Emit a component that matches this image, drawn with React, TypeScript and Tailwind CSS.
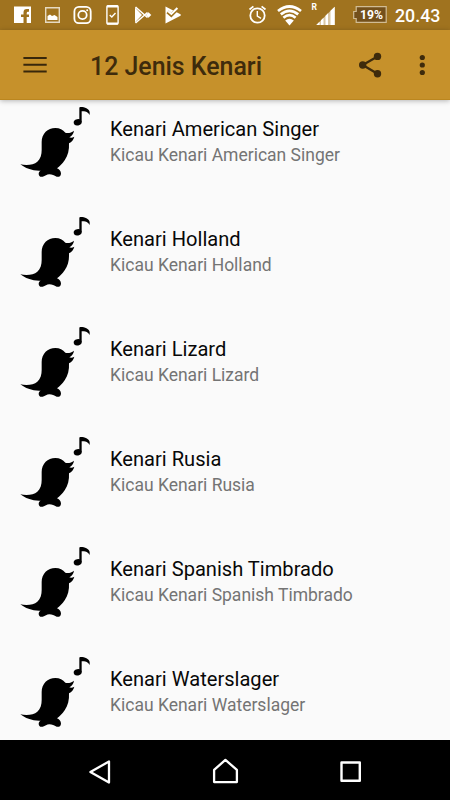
import React from 'react'

const birds = [
  'Kenari American Singer',
  'Kenari Holland',
  'Kenari Lizard',
  'Kenari Rusia',
  'Kenari Spanish Timbrado',
  'Kenari Waterslager'
]

function BirdIcon() {
  return (
    <svg className="w-[72px] h-[74px] shrink-0" viewBox="30 24 216 222" fill="#000">
      <path d="M31 199C50 203 71 201 82 191C92 182 95 170 95 156V132C95 107 113 90 136 90C149 90 159 95 166 104C175 107 184 104 192 98C191 106 187 111 183 115L178 118C183 120 188 119 193 116C191 125 185 132 177 136C178 156 174 173 164 187C157 197 149 206 141 211C147 213 153 219 153 227C152 235 146 238 140 236C133 232 126 229 118 229C110 229 106 234 98 236C91 238 86 234 86 227C86 222 89 219 92 218C67 219 46 211 31 199Z" />
      <ellipse cx="203" cy="73" rx="12" ry="9.5" transform="rotate(-12 203 73)" />
      <path d="M208 75V30Q208 26 213 27C224 27 237 32 239 42V51C233 41 225 40 215 40V73Z" />
    </svg>
  )
}

function StatusBar() {
  return (
    <div className="h-[30px] bg-[#a0731f] flex items-start text-white shrink-0">
      {/* Notifications */}
      <svg className="w-[186px] h-[30px] shrink-0" viewBox="0 0 186 30" fill="none" stroke="#fff">
        <path fill="#fff" stroke="none" d="M14 6.5H31V23H26.7V17H29V14.5H26.7V13.2Q26.7 11.8 28 11.8H29V9H26.8Q23.5 9 23.5 12.4V14.5H21V17H23.5V23H14Z" />
        <path stroke="#e6dac2" strokeWidth="1.4" d="M45.7 7.7H59.3V22.3H45.7Z" />
        <path fill="#fff" stroke="none" d="M47.5 20V16L50 14.5L52 16L54.5 15L57.5 17V20Z" />
        <rect x="74.4" y="6.9" width="16.3" height="16.3" rx="4.5" strokeWidth="1.8" />
        <circle cx="82.5" cy="15" r="4.2" strokeWidth="1.8" />
        <circle cx="87.2" cy="10.3" r="1" fill="#fff" stroke="none" />
        <rect x="106.9" y="5.8" width="11.2" height="18.3" rx="1" strokeWidth="1.4" />
        <path d="M107 6.5H118M107 23.5H118" strokeWidth="1.8" />
        <path d="M109.7 15L111.8 17L115.5 13" strokeWidth="1.4" />
        {/* Play Store */}
        <path fill="#fff" stroke="none" d="M135 7.5L142 15L135 22.5Z" />
        <path d="M135.5 7L147.5 17.5M135.5 23L147.5 12.5" strokeWidth="1.6" />
        <path fill="#fff" stroke="none" d="M145.8 15L148.5 12.2L151.3 15L148.5 17.8Z" />
        {/* Play Protect */}
        <path fill="#fff" stroke="none" d="M165.5 6.5L180.5 14.2Q181.3 15 180.5 15.8L165.5 23.5Z" />
        <path stroke="#a0731f" strokeWidth="3.6" d="M167.6 11.8L171.3 15L178.5 7.8" />
        <path strokeWidth="2" d="M168.2 11.2L171.4 14L177.4 8" />
      </svg>
      <div className="flex-1" />
      {/* System icons */}
      <svg className="w-[92px] h-[30px] shrink-0" viewBox="246 0 92 30" fill="none" stroke="#fff">
        <circle cx="257.5" cy="15.5" r="7.2" strokeWidth="1.8" />
        <path d="M249.5 9.5L253.4 6.3M265.5 9.5L261.6 6.3" strokeWidth="1.7" />
        <path d="M257.3 11V16L261 18.3" strokeWidth="1.4" />
        <path d="M278 11Q289.5 2 301 11M280.8 14.4Q289.5 7.2 298.2 14.4M283.4 17.7Q289.5 12.7 295.6 17.7" strokeWidth="2.7" />
        <path fill="#fff" stroke="none" d="M285.2 20.6Q289.5 17 293.8 20.6L289.5 25.6Z" />
        <text x="311.4" y="10" fill="#fff" stroke="none" fontFamily="Roboto, sans-serif" fontSize="8.5" fontWeight="700">R</text>
        <path fill="#d9c6a3" stroke="none" d="M316.3 25L334.7 6.7V25Z" />
        <path fill="#fff" stroke="none" d="M316.3 25L319.5 21.7V25ZM321 25V20.2L323.5 17.7V25ZM325.5 25V15.7L328 13.2V25ZM330.5 25V10.8L334.7 6.7V25Z" />
      </svg>
      <svg className="w-[36px] h-[30px] ml-[14px] shrink-0" viewBox="352 0 36 30">
        <path d="M356.2 6.7H386.2V22.3H356.2V18.5H353.7V11.5H356.2Z" fill="#73501b" stroke="#d1bc94" strokeWidth="1.2" />
        <text x="360" y="19.2" fill="#fff" fontFamily="Roboto, sans-serif" fontSize="13" fontWeight="700" textLength="23" lengthAdjust="spacingAndGlyphs">19%</text>
      </svg>
      <div className="w-[55px] ml-[7px] pt-[1px] text-[17.8px] leading-[30px] font-medium whitespace-nowrap">20.43</div>
    </div>
  )
}

function Toolbar() {
  return (
    <header className="relative z-10 h-[70px] bg-[#c6912b] flex items-center shrink-0 shadow-[0_1px_5px_rgba(0,0,0,0.28)] border-b border-[#bb861f]">
      <svg className="w-6 h-[18px] ml-[23px] mt-px" viewBox="0 0 24 18" stroke="#38270b" strokeWidth="2.1">
        <path d="M.4 2H23.7M.4 8.7H23.7M.4 15.5H23.7" />
      </svg>
      <h1 className="ml-[43px] mt-[4px] text-[24.9px] leading-[30px] font-medium text-[#3e2b0c] whitespace-nowrap">12 Jenis Kenari</h1>
      <div className="flex-1" />
      <svg className="w-[24px] h-[26px] shrink-0" viewBox="0 0 24 26" fill="#3e2b0c" stroke="#3e2b0c">
        <path d="M19.5 4.4L4.7 13L19.5 21.7" fill="none" strokeWidth="2.3" />
        <circle cx="19.5" cy="4.4" r="3.7" stroke="none" />
        <circle cx="4.7" cy="13" r="3.7" stroke="none" />
        <circle cx="19.5" cy="21.7" r="3.7" stroke="none" />
      </svg>
      <svg className="w-[6px] h-[22px] ml-[37px] mr-[25px] shrink-0" viewBox="0 0 6 22" fill="#3e2b0c">
        <circle cx="3.3" cy="3.5" r="2.6" />
        <circle cx="3.3" cy="11" r="2.6" />
        <circle cx="3.3" cy="18.5" r="2.6" />
      </svg>
    </header>
  )
}

function NavigationBar() {
  return (
    <nav className="h-[60px] bg-black flex items-center justify-between pl-[87px] pr-[87px] shrink-0">
      <svg className="w-6 h-[26px] mt-[4px]" viewBox="0 0 24 26" fill="none" stroke="#fff" strokeWidth="2.3" strokeLinejoin="round">
        <path d="M22 2.5V23.5L3.4 13Z" />
      </svg>
      <svg className="w-[28px] h-[28px] mt-[2px]" viewBox="0 0 28 28" fill="none" stroke="#fff" strokeWidth="2.3" strokeLinejoin="round">
        <path d="M14.4 2.9L25.9 12.9V25.1H3.1V12.9Z" />
      </svg>
      <svg className="w-[24px] h-6 mt-[4px]" viewBox="0 0 24 24" fill="none" stroke="#fff" strokeWidth="2.4" strokeLinejoin="round">
        <path d="M2.5 2.5H20.8V20.8H2.5Z" />
      </svg>
    </nav>
  )
}

export default function App() {
  return (
    <div className="w-[450px] h-[800px] overflow-hidden flex flex-col bg-[#fafafa] font-['Roboto',sans-serif]">
      <StatusBar />
      <Toolbar />
      <ul className="flex-1 min-h-0 overflow-hidden">
        {birds.map((name) => (
          <li key={name} className="h-[110px] flex items-start pt-[6px] pl-5">
            <BirdIcon />
            <div className="ml-[18px] pt-[11px] whitespace-nowrap">
              <h2 className="mb-px text-[20.1px] leading-[25px] text-[#080808]">{name}</h2>
              <p className="text-[17.5px] leading-[25px] text-[#747474]">Kicau {name}</p>
            </div>
          </li>
        ))}
      </ul>
      <NavigationBar />
    </div>
  )
}
